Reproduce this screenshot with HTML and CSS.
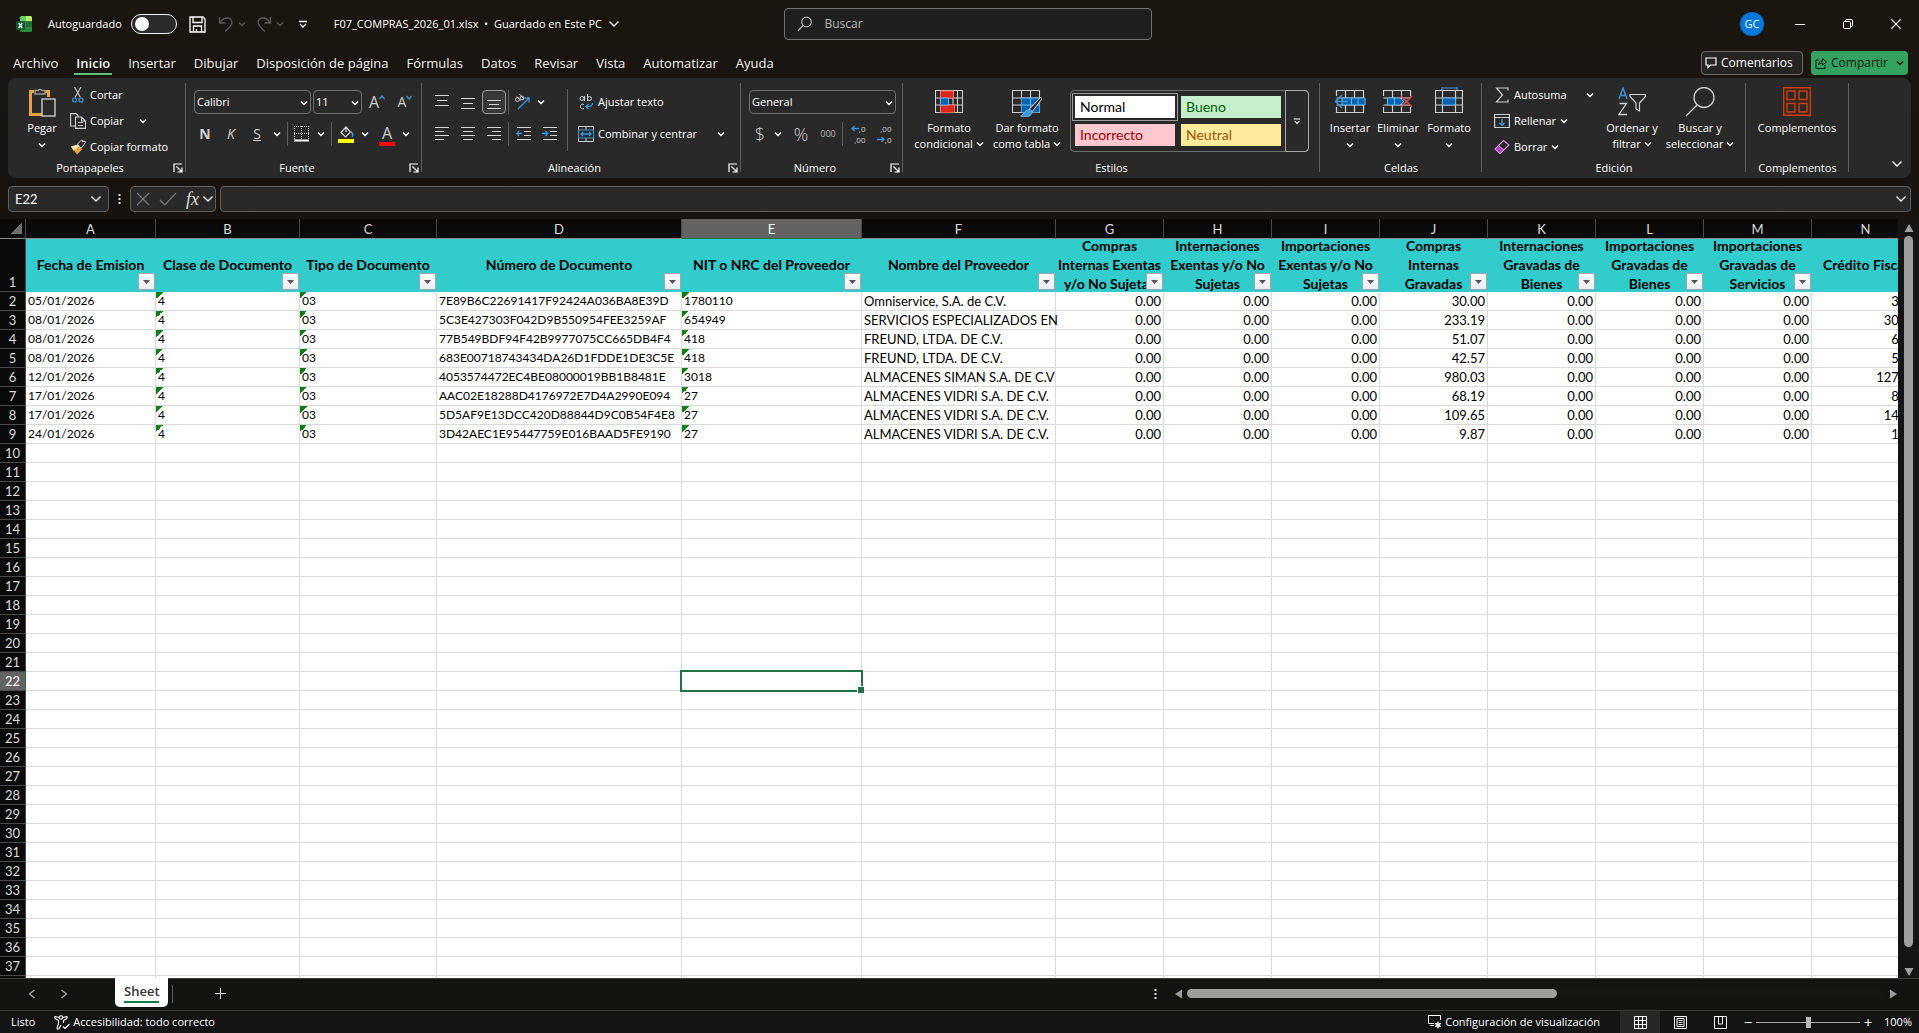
FILE: index.html
```html
<!DOCTYPE html>
<html lang="es">
<head>
<meta charset="utf-8">
<title>F07_COMPRAS_2026_01.xlsx - Excel</title>
<link rel="stylesheet" href="styles.css">
</head>
<body>
<svg class="defs" aria-hidden="true">
  <symbol id="chev" viewBox="0 0 8 8"><path d="M1 2.500l3 3 3-3" fill="none" stroke="currentColor" stroke-width="1.400"/></symbol>
  <symbol id="chev-lg" viewBox="0 0 12 12"><path d="M1.500 3.500L6 8l4.500-4.500" fill="none" stroke="currentColor" stroke-width="1.300"/></symbol>
  <symbol id="launch" viewBox="0 0 10 10"><path d="M1 9V1h8M3.500 3.500l5 5M9 4.500V9H4.500" fill="none" stroke="currentColor" stroke-width="1.200"/></symbol>
  <symbol id="more" viewBox="0 0 10 10"><path d="M1 2.500h8M2 5l3 3 3-3" fill="none" stroke="currentColor" stroke-width="1.300"/></symbol>
</svg>

<header class="titlebar">
  <div class="title-left">
    <svg class="app-icon" width="16" height="16" viewBox="0 0 16 16"><path d="M4 1.500A1.500 1.500 0 0 1 5.500 0H10v5.500H4z" fill="#5fd06a"/><path d="M10 0h4.500A1.500 1.500 0 0 1 16 1.500v4H10z" fill="#b5ef6c"/><path d="M4 5.500h12v9a1.500 1.500 0 0 1-1.500 1.500h-9A1.500 1.500 0 0 1 4 14.500z" fill="#2a8a3e"/><path d="M10 5.500h6V11h-6z" fill="#1f6e34"/><rect y="5" width="9" height="9" rx="1.500" fill="#0f5a30"/><path d="M2.700 7.200l3.600 4.800M6.300 7.200L2.700 12" stroke="#fff" stroke-width="1.300"/></svg>
    <label class="autosave"><span>Autoguardado</span><input type="checkbox" class="switch"></label>
    <button class="tb-btn save" aria-label="Guardar"><svg width="17" height="17" viewBox="0 0 17 17" fill="none" stroke="currentColor" stroke-width="1.300"><path d="M1 1h13l2 2v13H1zM4 1v5.500h9V1M4.500 16v-6h8v6M7.500 13v3"/></svg></button>
    <button class="tb-btn dim" aria-label="Deshacer"><svg width="16" height="16" viewBox="0 0 16 16" fill="none" stroke="currentColor" stroke-width="1.300"><path d="M1.500 1v6h6M1.500 7C4 3.500 6 2 9 2c3 0 5 2 5 4.500 0 3-3 5.500-7 9"/></svg></button>
    <svg class="chev dim"><use href="#chev"/></svg>
    <button class="tb-btn dim redo" aria-label="Rehacer"><svg width="16" height="16" viewBox="0 0 16 16" fill="none" stroke="currentColor" stroke-width="1.300"><path d="M14.500 1v6h-6M14.500 7C12 3.500 10 2 7 2 4 2 2 4 2 6.500c0 3 3 5.500 7 9"/></svg></button>
    <svg class="chev dim"><use href="#chev"/></svg>
    <button class="tb-btn custom" aria-label="Personalizar"><svg width="10" height="10"><use href="#more"/></svg></button>
    <button class="doc-name">F07_COMPRAS_2026_01.xlsx&nbsp; •&nbsp; Guardado en Este PC<svg width="12" height="12"><use href="#chev-lg"/></svg></button>
  </div>
  <label class="search"><svg width="16" height="16" viewBox="0 0 16 16" fill="none" stroke="#b8b8b8" stroke-width="1.200"><circle cx="9.500" cy="6" r="4.800"/><path d="M6 9.500L1 15"/></svg><input type="text" placeholder="Buscar" aria-label="Buscar"></label>
  <div class="title-right">
    <button class="avatar">GC</button>
    <button class="win" aria-label="Minimizar"><svg width="10" height="10"><path d="M0 5.500h10" stroke="#fff"/></svg></button>
    <button class="win" aria-label="Restaurar"><svg width="10" height="10" fill="none" stroke="#fff"><rect x=".5" y="2.500" width="7" height="7" rx="1"/><path d="M2.500 2.500v-1a1 1 0 0 1 1-1h5a1 1 0 0 1 1 1v5a1 1 0 0 1-1 1h-1"/></svg></button>
    <button class="win" aria-label="Cerrar"><svg width="10" height="10"><path d="M0 0l10 10M10 0L0 10" stroke="#fff" stroke-width="1.200"/></svg></button>
  </div>
</header>

<nav class="tabs">
  <a href="#">Archivo</a><a href="#" class="active">Inicio</a><a href="#">Insertar</a><a href="#">Dibujar</a><a href="#">Disposición de página</a><a href="#">Fórmulas</a><a href="#">Datos</a><a href="#">Revisar</a><a href="#">Vista</a><a href="#">Automatizar</a><a href="#">Ayuda</a>
  <div class="tab-actions">
    <button class="comments"><svg width="12" height="12" viewBox="0 0 12 12" fill="none" stroke="currentColor" stroke-width="1.200"><path d="M1 1h10v7H5.500L3 10.500V8H1z"/></svg>Comentarios</button>
    <button class="share"><svg width="12" height="12" viewBox="0 0 12 12" fill="none" stroke="currentColor"><path d="M4 3H1v8.500h9V8M3.500 8c.5-3 2-4 4-4V1.500L11.500 5 7.500 8V6c-2 0-3 .5-4 2z"/></svg>Compartir<svg class="chev"><use href="#chev"/></svg></button>
  </div>
</nav>

<section class="ribbon">
  <div class="group g-clip">
    <div class="body">
      <button class="big paste"><svg width="28" height="30" viewBox="0 0 28 30" fill="none"><path d="M6 4.500H2.500v23H14M17 4.500h3.500V10" stroke="#e8a33d" stroke-width="3"/><path d="M7 7V3.500h3a2.500 2.500 0 0 1 4 0h3V7z" fill="#292929" stroke="#9b9b9b" stroke-width="1.400"/><rect x="14" y="12" width="13" height="17" fill="#292929" stroke="#d8d8d8" stroke-width="1.300"/></svg><span>Pegar</span><svg class="chev"><use href="#chev"/></svg></button>
      <div class="stack">
        <button class="row"><svg width="16" height="16" viewBox="0 0 16 16" fill="none" stroke-width="1.200"><path d="M4.500 0l6 10.500M11 0L5 10.500" stroke="#c8c8c8"/><circle cx="4.500" cy="13" r="2" stroke="#3a96dd"/><circle cx="11" cy="13" r="2" stroke="#3a96dd"/></svg>Cortar</button>
        <button class="row"><svg width="16" height="16" viewBox="0 0 16 16" fill="none" stroke="#d0d0d0" stroke-width="1.100"><path d="M5 13H.6V.6H6l2 2V4"/><path d="M5.500 4h6l4 4v7.400h-10zM11.500 4v4h4M8 9.500h5M8 12.500h5"/></svg>Copiar<svg class="chev push"><use href="#chev"/></svg></button>
        <button class="row"><svg width="16" height="16" viewBox="0 0 16 16" fill="none"><path d="M1 7.500l7-2 4 5-5 5z" fill="#e8a33d"/><path d="M1 7.500l7-2 1.500 1.700-6 4.600z" fill="#f6dfae"/><path d="M7.500 5l4-4 1.500.5L12.500 3 15 2l.5 1.500-4.500 6z" fill="#292929" stroke="#d0d0d0"/></svg>Copiar formato</button>
      </div>
    </div>
    <footer class="launches">Portapapeles<button aria-label="Más opciones"><svg><use href="#launch"/></svg></button></footer>
  </div>

  <div class="group g-font">
    <div class="body lines">
      <div class="line fields">
        <span class="combo font-name"><select aria-label="Fuente"><option>Calibri</option></select><svg class="chev"><use href="#chev"/></svg></span>
        <span class="combo font-size"><select aria-label="Tamaño"><option>11</option></select><svg class="chev"><use href="#chev"/></svg></span>
        <button class="ic grow">A<svg width="6" height="5"><path d="M.5 4L3 1l2.500 3" fill="none" stroke="#3a96dd" stroke-width="1.200"/></svg></button>
        <button class="ic shrink">A<svg width="6" height="5"><path d="M.5 1L3 4l2.500-3" fill="none" stroke="#3a96dd" stroke-width="1.200"/></svg></button>
      </div>
      <div class="line">
        <button class="ic letter"><b>N</b></button><button class="ic letter"><i>K</i></button><button class="ic letter"><u>S</u></button><svg class="chev slot"><use href="#chev"/></svg>
        <span class="vsep w"></span>
        <button class="ic24" aria-label="Bordes"><svg width="16" height="16" fill="none" stroke="#d0d0d0"><path d="M.5 0v15M7.500 0v15M14.500 0v15M0 .5h15M0 7.500h15" stroke-dasharray="1 1"/><path d="M0 14.500h15" stroke="#fff" stroke-width="2"/></svg></button><svg class="chev slot"><use href="#chev"/></svg>
        <span class="vsep w"></span>
        <button class="ic24" aria-label="Color de relleno"><svg width="16" height="17" viewBox="0 0 16 17" fill="none"><path d="M8 1L3 6.500l4.500 4.500L12.500 6zM8 1v5" stroke="#d0d0d0" stroke-width="1.200"/><path d="M13 5.500c2 2 2 4 1 5.500" stroke="#3a96dd" stroke-width="1.600"/><path d="M0 13h16v4H0z" fill="#ff0"/></svg></button><svg class="chev slot"><use href="#chev"/></svg>
        <button class="ic24 fc">A</button><svg class="chev slot"><use href="#chev"/></svg>
      </div>
    </div>
    <footer class="launches">Fuente<button aria-label="Más opciones"><svg><use href="#launch"/></svg></button></footer>
  </div>

  <div class="group g-align">
    <div class="body">
      <div class="lines">
        <div class="line">
          <button class="ic" aria-label="Alinear arriba"><svg width="14" height="14" class="ln"><path d="M0 .5h14M2 5.500h10M0 10.500h14"/></svg></button><button class="ic" aria-label="Alinear en medio"><svg width="14" height="14" class="ln"><path d="M0 3.500h14M2 8.500h10M0 13.500h14"/></svg></button><button class="ic on" aria-label="Alinear abajo"><svg width="14" height="14" class="ln"><path d="M0 5.500h14M2 9.500h10M0 13.500h14"/></svg></button><span class="vsep"></span><button class="ic24" aria-label="Orientación"><svg width="16" height="16" viewBox="0 0 16 16" fill="none"><g stroke="#d0d0d0"><circle cx="3.500" cy="5.500" r="1.900"/><path d="M3 2.500l3.500 4"/><circle cx="8" cy="4" r="1.900"/><path d="M5.500 0l4 4.500"/></g><path d="M4 15L15 4M10.500 4H15v4.500" stroke="#3a96dd" stroke-width="1.400"/></svg></button><svg class="chev slot"><use href="#chev"/></svg>
        </div>
        <div class="line">
          <button class="ic" aria-label="Izquierda"><svg width="14" height="14" class="ln"><path d="M0 .5h14M0 4.500h9M0 8.500h14M0 12.500h9"/></svg></button><button class="ic" aria-label="Centrar"><svg width="14" height="14" class="ln"><path d="M0 .5h14M2 4.500h10M0 8.500h14M2 12.500h10"/></svg></button><button class="ic" aria-label="Derecha"><svg width="14" height="14" class="ln"><path d="M0 .5h14M5 4.500h9M0 8.500h14M5 12.500h9"/></svg></button><span class="vsep"></span><button class="ic" aria-label="Disminuir sangría"><svg width="15" height="14" class="ln"><path d="M1 .5h14M8 4.500h7M8 8.500h7M1 12.500h14"/><path d="M6 6.500H.8M3 4L.8 6.500 3 9" class="bl"/></svg></button><button class="ic" aria-label="Aumentar sangría"><svg width="15" height="14" class="ln"><path d="M1 .5h14M8 4.500h7M8 8.500h7M1 12.500h14"/><path d="M0 6.500h5.500M3.500 4l2.200 2.500L3.500 9" class="bl"/></svg></button>
        </div>
      </div>
      <span class="tall-sep"></span>
      <div class="lines wide">
        <button class="row"><svg width="16" height="16" viewBox="0 0 16 16" fill="none" stroke="#d0d0d0"><circle cx="4" cy="4.500" r="2"/><path d="M6.500 2v5M9.500 0v7"/><circle cx="11.500" cy="4.500" r="2"/><path d="M6 10.500c-1.500-1-3.500 0-3.500 2s2 3 3.500 2"/><path d="M14.500 9c0 3-2 3.500-6.500 3.500M10.500 10L8 12.500l2.500 2.500" stroke="#3a96dd" stroke-width="1.400"/></svg>Ajustar texto</button>
        <button class="row"><svg width="16" height="16" viewBox="0 0 16 16" fill="none" stroke="#d0d0d0"><path d="M.5.500h15v15H.5zM8 0v4M8 12v4"/><rect x=".5" y="4" width="15" height="8" fill="#292929" stroke="#3a96dd"/><path d="M3 8h10M5 6L3 8l2 2M11 6l2 2-2 2" stroke="#3a96dd" stroke-width="1.300"/></svg>Combinar y centrar<svg class="chev push"><use href="#chev"/></svg></button>
      </div>
    </div>
    <footer class="launches">Alineación<button aria-label="Más opciones"><svg><use href="#launch"/></svg></button></footer>
  </div>

  <div class="group g-num">
    <div class="body lines">
      <span class="combo"><select aria-label="Formato de número"><option>General</option></select><svg class="chev"><use href="#chev"/></svg></span>
      <div class="line">
        <button class="ic sym cur">$</button><svg class="chev slot"><use href="#chev"/></svg><button class="ic sym pct">%</button><button class="ic zeros">000</button><span class="vsep"></span>
        <button class="ic dec"><span><svg width="8" height="7"><path d="M8 3.500H1M3.500 1L1 3.500 3.500 6" class="bl"/></svg>,0</span><span>,00</span></button><button class="ic dec"><span>,00</span><span><svg width="8" height="7"><path d="M0 3.500h7M4.500 1L7 3.500 4.500 6" class="bl"/></svg>,0</span></button>
      </div>
    </div>
    <footer class="launches">Número<button aria-label="Más opciones"><svg><use href="#launch"/></svg></button></footer>
  </div>

  <div class="group g-styles">
    <div class="body">
      <button class="big"><svg width="28" height="30" viewBox="0 0 28 30" fill="none"><path d="M.5 3.500h27v22H.5zM0 11h28M0 18h28M5.500 3.500v22M18 3.500v22M22.500 3.500v22" stroke="#d0d0d0" stroke-width="1.100"/><path d="M5.500 4h13v7h-13zM5.500 18h14v7.500h-14z" fill="#d7261c" stroke="#ff6a5e"/><path d="M5.500 11h8v7h-8z" fill="#0063b1" stroke="#69b5f0"/></svg><span>Formato<br>condicional <svg class="chev"><use href="#chev"/></svg></span></button>
      <button class="big"><svg width="30" height="30" viewBox="0 0 30 30" fill="none"><path d="M.5 3.500h27v22H.5zM0 11h28M0 18h28M9.500 3.500v22M18.500 3.500v22" stroke="#d0d0d0" stroke-width="1.100"/><path d="M9.500 11h18v14.500h-18z" fill="#0063b1"/><path d="M9.500 18h18M18.500 11v14M9.500 11h18" stroke="#69b5f0"/><path d="M28.500 10.500c1 0 1.500 1 1 2L20 25l-3-2.500z" fill="#292929" stroke="#d8d8d8"/><path d="M17 22.500c3 0 4 3 2 5-2.500 3-7 3.500-10.500 1.500 3-1 3-5 8.500-6.500z" fill="#3a96dd" stroke="#8cc8f5" stroke-width=".8"/></svg><span>Dar formato<br>como tabla <svg class="chev"><use href="#chev"/></svg></span></button>
      <div class="gallery">
        <div class="swatches"><button class="st normal">Normal</button><button class="st good">Bueno</button><button class="st bad">Incorrecto</button><button class="st neutral">Neutral</button></div>
        <button class="more" aria-label="Más estilos"><svg width="8" height="8"><use href="#more"/></svg></button>
      </div>
    </div>
    <footer>Estilos</footer>
  </div>

  <div class="group g-cells">
    <div class="body">
      <button class="big"><svg width="32" height="30" viewBox="0 0 32 30" fill="none"><path d="M2.500 9V3.500h27v22h-27V20M11.500 3.500v22M20.500 3.500v22M2.500 11h27M2.500 18h27" stroke="#d0d0d0" stroke-width="1.200"/><path d="M8 11h23v7H8z" fill="#0063b1" stroke="#69b5f0"/><path d="M17.500 11v7M24 11v7" stroke="#69b5f0"/><path d="M14 14.500H1M8 8l-6.500 6.500L8 21" stroke="#3a96dd" stroke-width="1.500"/></svg><span>Insertar</span><svg class="chev"><use href="#chev"/></svg></button>
      <button class="big"><svg width="30" height="30" viewBox="0 0 30 30" fill="none"><path d="M.5 9V3.500h27V9M.5 20v5.500h27V20M9.500 3.500v22M18.500 3.500v22M.5 11h27M.5 18h27" stroke="#d0d0d0" stroke-width="1.200"/><path d="M4.500 11H17l4 3.500-4 3.500H4.500z" fill="#0063b1" stroke="#69b5f0"/><path d="M11.500 11v7" stroke="#69b5f0"/><path d="M18 9l11 11M29 9L18 20" stroke="#e5484d" stroke-width="1.500"/></svg><span>Eliminar</span><svg class="chev"><use href="#chev"/></svg></button>
      <button class="big wide-b"><svg width="28" height="30" viewBox="0 0 28 30" fill="none"><path d="M.5 3.500h27v22H.5zM0 11h28M0 18h28M7.500 3.500v22M20.500 3.500v22" stroke="#d0d0d0" stroke-width="1.200"/><path d="M7.500 11h13v7h-13z" fill="#0063b1" stroke="#69b5f0"/><path d="M7 0v3M22 0v3M7 1h15" stroke="#3a96dd" stroke-width="1.200"/></svg><span>Formato</span><svg class="chev"><use href="#chev"/></svg></button>
    </div>
    <footer>Celdas</footer>
  </div>

  <div class="group g-edit">
    <div class="body">
      <div class="stack">
        <button class="row"><svg width="16" height="16" viewBox="0 0 16 16" fill="none"><path d="M14 3.500V1H2.500l6 7-6 7H14v-2.500" stroke="#d0d0d0" stroke-width="1.200"/></svg>Autosuma<svg class="chev push"><use href="#chev"/></svg></button>
        <button class="row"><svg width="16" height="16" viewBox="0 0 16 16" fill="none"><path d="M.6 1.500h14.800v13H.6zM.6 4.500h14.800" stroke="#d0d0d0" stroke-width="1.200"/><path d="M8 6v6.500M5.500 10L8 12.500 10.500 10" stroke="#3a96dd" stroke-width="1.400"/></svg>Rellenar<svg class="chev"><use href="#chev"/></svg></button>
        <button class="row"><svg width="16" height="16" viewBox="0 0 16 16" fill="none"><path d="M9.500 1.500L15 6l-9 8.500L1 10z" stroke="#d892e6" stroke-width="1.100"/><path d="M4.500 6.500L10 11l-4 3.500L1 10z" fill="#b146c2" stroke="#d892e6"/></svg>Borrar<svg class="chev"><use href="#chev"/></svg></button>
      </div>
      <button class="big sort"><svg width="28" height="30" viewBox="0 0 28 30" fill="none"><path d="M1 12L5 1l4 11M2.500 8.500h5" stroke="#3a96dd" stroke-width="1.400"/><path d="M1.500 16.500h7L1 27.500h8" stroke="#d0d0d0" stroke-width="1.300"/><path d="M12 7.500h15.500v2L21.500 16v8l-3.500-2v-6l-6-6.500z" stroke="#d0d0d0" stroke-width="1.200"/></svg><span>Ordenar y<br>filtrar <svg class="chev"><use href="#chev"/></svg></span></button>
      <button class="big find"><svg width="30" height="30" viewBox="0 0 30 30" fill="none" stroke="#d0d0d0" stroke-width="1.300"><circle cx="19" cy="10.500" r="10"/><path d="M12 18L1 29"/></svg><span>Buscar y<br>seleccionar <svg class="chev"><use href="#chev"/></svg></span></button>
    </div>
    <footer>Edición</footer>
  </div>

  <div class="group g-add">
    <div class="body">
      <button class="big"><svg width="28" height="30" viewBox="0 0 28 30" fill="none" stroke="#d83b01" stroke-width="1.400"><path d="M.7.700h26.600v27.600H.7zM4 4h8v8.500H4zM16 4h8v8.500h-8zM4 16.500h8V25H4zM16 16.500h8V25h-8z"/></svg><span>Complementos</span></button>
    </div>
    <footer>Complementos</footer>
  </div>
  <button class="collapse" aria-label="Contraer la cinta"><svg width="12" height="12"><use href="#chev-lg"/></svg></button>
</section>

<section class="formula-bar">
  <span class="name-box"><input type="text" value="E22" aria-label="Cuadro de nombres"><svg width="12" height="12"><use href="#chev-lg"/></svg></span>
  <svg class="dots" width="3" height="12"><path d="M1.500 1v11" stroke="#ddd" stroke-width="2" stroke-dasharray="2 2"/></svg>
  <span class="fx-box">
    <button aria-label="Cancelar"><svg width="14" height="14"><path d="M1 1l12 12M13 1L1 13" stroke="#7a7a7a" stroke-width="1.200"/></svg></button><button aria-label="Introducir"><svg width="18" height="14"><path d="M1 8l5 5L17 1" fill="none" stroke="#7a7a7a" stroke-width="1.200"/></svg></button><button class="fx"><i>fx</i></button><svg width="12" height="12" class="fxc"><use href="#chev-lg"/></svg>
  </span>
  <span class="formula"><input type="text" aria-label="Barra de fórmulas"><svg width="12" height="12"><use href="#chev-lg"/></svg></span>
</section>

<main class="sheet">
  <div class="grid-view">
    <table id="grid"></table>
  </div>
  <div class="vscroll"><svg width="10" height="8"><path d="M5 0l4.500 8H.5z" fill="#9e9e9e"/></svg><span class="thumb"></span><svg width="10" height="8"><path d="M5 8L.5 0h9z" fill="#9e9e9e"/></svg></div>
</main>

<section class="sheet-tabs">
  <button class="nav-arrow" aria-label="Anterior"><svg width="8" height="10"><path d="M6.500 1L1.500 5l5 4" fill="none" stroke="#a8a8a8" stroke-width="1.300"/></svg></button>
  <button class="nav-arrow" aria-label="Siguiente"><svg width="8" height="10"><path d="M1.500 1l5 4-5 4" fill="none" stroke="#a8a8a8" stroke-width="1.300"/></svg></button>
  <button class="sheet-tab"><span>Sheet</span></button>
  <span class="tab-sep"></span>
  <button class="add" aria-label="Hoja nueva"><svg width="11" height="11"><path d="M0 5.500h11M5.500 0v11" stroke="#e0e0e0"/></svg></button>
  <div class="hbar">
    <svg class="dots" width="3" height="12"><path d="M1.500 1v11" stroke="#ddd" stroke-width="2" stroke-dasharray="2 2"/></svg>
    <div class="hscroll"><svg width="8" height="10"><path d="M0 5l7-4.500v9z" fill="#9e9e9e"/></svg><span class="track"><span class="thumb"></span></span><svg width="8" height="10"><path d="M8 5L1 .5v9z" fill="#9e9e9e"/></svg></div>
  </div>
</section>

<footer class="status">
  <span class="ready">Listo</span>
  <button class="acc"><svg width="16" height="15" viewBox="0 0 16 15" fill="none" stroke="#fff" stroke-width="1.100"><circle cx="7" cy="2.500" r="1.700"/><path d="M5 2.500L1.500 1.500C0 2 1 3.500 2 4l2.500 1.500v3L3 13c0 1.500 1.500 1.500 2 .5L7 10M9 2.500l3.500-1c1.500.5.500 2-.5 2.500L9.500 5.500V8M9 11.500l2 2L15.500 9"/></svg>Accesibilidad: todo correcto</button>
  <div class="status-right">
    <button class="disp"><svg width="14" height="14" viewBox="0 0 14 14" fill="none" stroke="#fff"><path d="M6 8.500H.5V.5h12V5M2 10.500h4"/><circle cx="10" cy="10" r="2"/><path d="M10 6.500v7M7 8.200l6 3.600M13 8.200l-6 3.600"/></svg>Configuración de visualización</button>
    <button class="view active-view" aria-label="Normal"><svg width="13" height="13" fill="none" stroke="#fff"><path d="M.5.500h12v12H.5zM4.500 0v13M8.500 0v13M0 4.500h13M0 8.500h13"/></svg></button>
    <button class="view" aria-label="Diseño de página"><svg width="13" height="13" fill="none" stroke="#fff"><path d="M.5.500h12v12H.5zM3 2.500h7v8H3zM4.500 4.500h4M4.500 6.500h4M4.500 8.500h4"/></svg></button>
    <button class="view" aria-label="Salto de página"><svg width="13" height="13" fill="none" stroke="#fff"><path d="M.5.500h12v12H.5zM4.500 0v8h4V0"/></svg></button>
    <button class="zb">−</button><input type="range" min="10" max="190" value="100" aria-label="Zoom"><button class="zb">+</button><button class="pct100">100%</button>
  </div>
</footer>
<script src="sheet.js"></script>
</body>
</html>
```

FILE: styles.css
```css
* { box-sizing: border-box; }
body {
  margin: 0;
  height: 100vh;
  display: flex;
  flex-direction: column;
  overflow: hidden;
  background: linear-gradient(#1c1611, #15110e 30%, #12150f 90%);
  color: #fff;
  font: 12px/16px "Open Sans", "Noto Sans", sans-serif;
}
button, input, select { font: inherit; color: inherit; background: none; border: 0; padding: 0; margin: 0; outline: 0; }
svg { display: block; flex: none; }
.defs { display: none; }
.chev { width: 8px; height: 8px; }
.dim { color: #5c5855; }
.bl { fill: none; stroke: #3a96dd; stroke-width: 1.3; }
.ln { fill: none; stroke: #d8d8d8; }

/* Title bar */
.titlebar { height: 48px; display: grid; grid-template-columns: 1fr 368px 1fr; align-items: center; padding-left: 16px; font-size: 11px; }
.title-left { display: flex; align-items: center; white-space: nowrap; }
.autosave { display: flex; align-items: center; gap: 9px; margin-left: 16px; }
.switch { appearance: none; width: 46px; height: 20px; border: 1px solid #f0f0f0; border-radius: 10px; background: #2b2b2b; padding: 2px 3px; }
.switch::before { content: ""; display: block; width: 14px; height: 14px; border-radius: 50%; background: #fff; }
.tb-btn { margin-left: 12px; }
.tb-btn + .chev { margin-left: 4px; }
.redo { margin-left: 10px; }
.custom { margin-left: 14px; }
.doc-name { display: flex; align-items: center; gap: 6px; margin-left: 26px; }
.search { display: flex; align-items: center; gap: 12px; height: 32px; padding: 0 12px; background: #1f1f1f; border: 1px solid #737170; border-radius: 4px; font-size: 12px; }
.search input { flex: 1; }
.search input::placeholder { color: #b8b8b8; opacity: 1; }
.title-right { display: flex; justify-content: flex-end; align-items: center; }
.avatar { width: 24px; height: 24px; border-radius: 50%; background: #0078d7; margin-right: 12px; }
.win { width: 48px; height: 32px; display: grid; place-items: center; }
.win:last-child { margin-right: -1px; }

/* Ribbon tabs */
.tabs { height: 30px; display: flex; padding: 0 11px 0 4px; font-size: 13px; }
.tabs a { height: 27px; line-height: 30px; padding: 0 9px; color: #f2f2f2; text-decoration: none; white-space: nowrap; }
.tabs .active { font-weight: 600; background: linear-gradient(#5fbf7c, #5fbf7c) center bottom / calc(100% - 14px) 2px no-repeat; }
.tab-actions { margin-left: auto; display: flex; gap: 8px; padding: 3px 0; }
.tab-actions button { height: 24px; display: flex; align-items: center; gap: 4px; border-radius: 4px; padding: 0 4px; font-size: 12px; }
.comments { width: 102px; background: #262423; outline: 1px solid #6b6866; outline-offset: -1px; }
.share { width: 97px; background: #35a35f; color: #0b1a10; }
.share .chev { margin-left: auto; }

/* Ribbon */
.ribbon { position: relative; display: flex; margin: 0 8px; height: 100px; padding: 5px 0 2px; background: #292929; border-radius: 8px; }
.group { display: flex; flex-direction: column; background: linear-gradient(#5e5e5e, #5e5e5e) right top / 1px 89px no-repeat; font-size: 11px; }
.body { flex: 1; display: flex; align-items: flex-start; }
.group footer { position: relative; height: 16px; text-align: center; }
.group .launches { padding-right: 14px; }
.group footer button { position: absolute; right: 3px; top: 3px; }
.group footer svg { width: 10px; height: 10px; }
.g-clip { width: 178px; }
.g-font { width: 236px; }
.g-align { width: 319px; }
.g-num { width: 162px; }
.g-styles { width: 417px; }
.g-cells { width: 162px; }
.g-edit { width: 264px; }
.g-add { width: 103px; }
.big { display: flex; flex-direction: column; align-items: center; padding-top: 4px; width: 72px; line-height: 16px; white-space: nowrap; }
.big > svg:first-child { margin-bottom: 3px; }
.big > .chev { margin-top: 5px; }
.big span .chev { display: inline-block; }
.paste { width: 48px; margin: 0 4px 0 10px; }
.stack { display: flex; flex-direction: column; gap: 2px; }
.row { display: flex; align-items: center; gap: 4px; height: 24px; white-space: nowrap; }
.push { margin-left: auto; }
.g-clip .stack .row:nth-child(2) { width: 77px; }
.lines { display: flex; flex-direction: column; align-items: stretch; gap: 8px; padding-top: 7px; }
.line { display: flex; align-items: center; height: 24px; }
.g-font .lines { padding-left: 6px; }
.fields { gap: 2px; padding-left: 2px; }
.combo { position: relative; display: block; height: 24px; }
.combo select { appearance: none; width: 100%; height: 24px; border: 1px solid #6e6e6e; border-radius: 4px; padding: 0 2px; background: #292929; }
.combo .chev { position: absolute; right: 3px; top: 9px; pointer-events: none; }
.font-name { width: 117px; }
.font-size { width: 49px; }
.ic { width: 26px; height: 24px; display: flex; align-items: center; justify-content: center; }
.ic24 { width: 24px; height: 24px; display: flex; align-items: center; justify-content: center; }
.slot { margin: 0 3px; }
.vsep { width: 1px; height: 24px; margin: 0 1px; background: #5e5e5e; }
.vsep.w { margin: 0 2px 0 3px; }
.letter { font-size: 14px; color: #d0d0d0; }
.grow, .shrink { color: #d0d0d0; }
.grow { font-size: 16px; }
.shrink { font-size: 14px; }
.grow svg, .shrink svg { align-self: flex-start; margin-top: 5px; }
.fc { font-size: 16px; line-height: 14px; color: #d0d0d0; margin-left: 3px; padding-bottom: 3px; background: linear-gradient(red, red) center 20px / 16px 4px no-repeat; }
.on { width: 24px; margin: 0 1px; border: 1px solid #9a9a9a; border-radius: 4px; background: #383838; }
.g-align .body { padding-left: 7px; }
.tall-sep { width: 1px; height: 62px; margin: 6px 10px 0 5px; background: #5e5e5e; }
.wide { flex: 1; padding-right: 16px; }
.g-num .lines { padding: 7px 7px 0 8px; }
.sym { font-size: 18px; color: #d0d0d0; font-weight: 300; }
.cur { width: 22px; }
.pct { width: 28px; margin-left: 2px; }
.zeros { font-size: 9px; color: #b8b8b8; }
.dec { flex-direction: column; font-size: 8px; line-height: 11px; color: #d0d0d0; }
.dec span { display: flex; align-items: center; justify-content: flex-end; width: 17px; }
.g-styles .body { padding-left: 10px; gap: 6px; }
.gallery { display: flex; width: 239px; height: 62px; margin: 7px 0 0 1px; border: 1px solid #6e6e6e; border-radius: 4px; }
.swatches { flex: 1; display: grid; grid-template-columns: 100px 100px; grid-template-rows: 22px 22px; gap: 6px; padding: 5px 4px; font: 14px/22px "Lato", sans-serif; }
.st { text-align: left; padding-left: 5px; }
.normal { background: #fff; color: #000; outline: 1px solid #9a9a9a; outline-offset: 2px; }
.good { background: #c6efce; color: #006100; }
.bad { background: #ffc7ce; color: #9c0006; }
.neutral { background: #ffeb9c; color: #9c5700; }
.more { width: 24px; margin: -1px; border: 1px solid #a8a8a8; border-radius: 0 4px 4px 0; display: grid; place-items: center; }
.g-cells .body { padding-left: 6px; }
.g-cells .big { width: 48px; }
.g-cells .wide-b { width: 54px; }
.g-edit .body { padding-left: 12px; }
.g-edit .stack { width: 100px; }
.g-edit .sort { width: 66px; margin-left: 5px; }
.g-edit .find { width: 70px; }
.g-add .big { width: 102px; }
.collapse { margin: auto 8px 6px auto; }

/* Formula bar */
.formula-bar { display: flex; align-items: center; height: 41px; padding: 0 8px; font-size: 12px; }
.name-box, .fx-box, .formula { height: 26px; display: flex; align-items: center; background: #292929; border: 1px solid #5e5e5e; border-radius: 4px; }
.name-box { width: 101px; padding: 0 6px; }
.name-box input { flex: 1; min-width: 0; font-family: "Lato", sans-serif; font-size: 13px; }
.formula-bar .dots { margin: 0 9px; }
.fx-box { width: 86px; gap: 9px; padding-left: 5px; }
.fx { font: 18px/20px "Liberation Serif", serif; color: #ddd; }
.fxc { margin-left: -6px; }
.formula { flex: 1; margin-left: 4px; padding: 0 3px; }
.formula input { flex: 1; }

/* Grid */
.sheet { flex: 1; min-height: 0; display: flex; background: #141414; }
.grid-view { flex: 1; min-width: 0; overflow: hidden; background: #fff; color: #000; }
#grid { width: 1920px; table-layout: fixed; border-collapse: separate; border-spacing: 0; font: 13px/18px "Lato", sans-serif; }
#grid td { height: 19px; padding: 0 2px; border-right: 1px solid #dadada; border-bottom: 1px solid #dadada; white-space: nowrap; overflow: hidden; position: relative; }
#grid .num { text-align: right; }
#grid .code { font-size: 12px; }
#grid .name { padding-right: 0; overflow: visible; }
#grid th { padding: 0; font-weight: 400; background: #0a0a0a; color: #dcdcdc; }
#grid thead th { height: 20px; padding-top: 1px; line-height: 18px; border-right: 1px solid #4a4a4a; border-bottom: 1px solid #8c8c8c; }
#grid thead th.sel { background: #636363; border-bottom-color: #217346; color: #fff; }
#grid tbody th { height: 19px; border-right: 1px solid #4a4a4a; border-bottom: 1px solid #4a4a4a; vertical-align: bottom; }
#grid tbody th.sel { background: #636363; color: #fff; border-right-color: #217346; }
#grid .corner { background: linear-gradient(135deg, transparent 50%, #6e6e6e 50%) 10px 3px / 12px 12px no-repeat #0a0a0a; }
#grid .titles td { height: 53px; padding: 0; background: #33cccc; border-color: #33cccc; font-size: 14px; font-weight: 700; text-align: center; }
.cap { height: 52px; display: flex; flex-direction: column; justify-content: center; padding-bottom: 2px; line-height: 19px; overflow: hidden; }
.filter { position: absolute; right: 0; bottom: 1px; width: 17px; height: 17px; display: grid; place-items: center; background: linear-gradient(#fff, #e9ecf2); border: 1px solid #a0a4ac; }
#grid .err { background: linear-gradient(135deg, #0a8010 50%, transparent 50%) 0 0 / 7px 7px no-repeat; }
#grid .cursor { overflow: visible; z-index: 1; }
.cursor::before { content: ""; position: absolute; inset: -2px; border: 2px solid #217346; }
.cursor::after { content: ""; position: absolute; right: -3px; bottom: -3px; width: 6px; height: 6px; background: #217346; border: 1px solid #fff; border-width: 1px 0 0 1px; }
.vscroll { width: 21px; display: flex; flex-direction: column; align-items: center; padding: 5px 0 2px; }
.vscroll .thumb { flex: 1; width: 9px; margin: 4px 0 21px; border-radius: 5px; background: #9e9e9e; }

/* Sheet tabs */
.sheet-tabs { height: 32px; display: flex; align-items: center; padding-bottom: 2px; border-top: 1px solid #3a4038; background: #12150f; }
.nav-arrow { width: 32px; display: grid; place-items: center; }
.nav-arrow:first-child { margin-left: 16px; }
.sheet-tab { width: 53px; height: 29px; align-self: flex-start; margin: -1px 4px 0 35px; padding: 2px 9px 3px; background: #fff; color: #333; border-radius: 0 0 5px 5px; font-size: 13px; font-weight: 600; line-height: 20px; }
.sheet-tab span { display: block; border-bottom: 2px solid #107c41; }
.tab-sep { width: 1px; height: 18px; background: #555; }
.add { margin-left: 42px; }
.hbar { margin-left: auto; display: flex; align-items: center; gap: 18px; width: 765px; padding-right: 22px; }
.hscroll { flex: 1; display: flex; align-items: center; gap: 4px; }
.track { flex: 1; background: #141414; }
.track .thumb { display: block; width: 53%; height: 9px; border-radius: 5px; background: #9e9e9e; }

/* Status bar */
.status { height: 23px; display: flex; align-items: center; padding-left: 11px; background: #141414; border-top: 1px solid #3a3a3a; font-size: 11px; }
.acc { display: flex; align-items: center; gap: 3px; margin-left: 19px; }
.status-right { margin-left: auto; display: flex; align-items: center; height: 22px; padding-right: 7px; }
.disp { display: flex; align-items: center; gap: 3px; margin-right: 20px; }
.view { width: 40px; height: 22px; display: grid; place-items: center; }
.active-view { background: #262626; }
.zb { width: 16px; font-size: 15px; }
.status input { appearance: none; width: 104px; height: 16px; background: linear-gradient(#a8a8a8, #a8a8a8) center / 100% 1px no-repeat; }
.status input::-webkit-slider-thumb { appearance: none; width: 5px; height: 11px; background: #b8b8b8; }
.pct100 { margin-left: 8px; }
```

FILE: sheet.js
```js
const widths = [26, 130, 144, 137, 245, 180, 194, 108, 108, 108, 108, 108, 108, 108, 108];
const titles = [
  'Fecha de Emision', 'Clase de Documento', 'Tipo de Documento', 'Número de Documento',
  'NIT o NRC del Proveedor', 'Nombre del Proveedor', 'Compras|Internas Exentas|y/o No Sujetas',
  'Internaciones|Exentas y/o No|Sujetas', 'Importaciones|Exentas y/o No|Sujetas',
  'Compras|Internas|Gravadas', 'Internaciones|Gravadas de|Bienes', 'Importaciones|Gravadas de|Bienes',
  'Importaciones|Gravadas de|Servicios', 'Crédito Fiscal'
];
const records = [
  ['05/01/2026', '7E89B6C22691417F92424A036BA8E39D', '1780110', 'Omniservice, S.A. de C.V.', '30.00', '3.90'],
  ['08/01/2026', '5C3E427303F042D9B550954FEE3259AF', '654949', 'SERVICIOS ESPECIALIZADOS EN', '233.19', '30.31'],
  ['08/01/2026', '77B549BDF94F42B9977075CC665DB4F4', '418', 'FREUND, LTDA. DE C.V.', '51.07', '6.64'],
  ['08/01/2026', '683E00718743434DA26D1FDDE1DE3C5E', '418', 'FREUND, LTDA. DE C.V.', '42.57', '5.53'],
  ['12/01/2026', '4053574472EC4BE08000019BB1B8481E', '3018', 'ALMACENES SIMAN S.A. DE C.V', '980.03', '127.40'],
  ['17/01/2026', 'AAC02E18288D4176972E7D4A2990E094', '27', 'ALMACENES VIDRI S.A. DE C.V.', '68.19', '8.86'],
  ['17/01/2026', '5D5AF9E13DCC420D88844D9C0B54F4E8', '27', 'ALMACENES VIDRI S.A. DE C.V.', '109.65', '14.25'],
  ['24/01/2026', '3D42AEC1E95447759E016BAAD5FE9190', '27', 'ALMACENES VIDRI S.A. DE C.V.', '9.87', '1.28']
];
const filter = '<button class="filter" aria-label="Filtrar"><svg width="7" height="4"><path d="M0 0h7L3.500 4z" fill="#555"/></svg></button>';
const letters = 'ABCDEFGHIJKLMN'.split('');
const kinds = ['code', 'code err', 'code err', 'code', 'code err', 'name'];

let html = '<colgroup>' + widths.map(w => `<col style="width:${w}px">`).join('') + '</colgroup>';
html += '<thead><tr><th class="corner"></th>' +
  letters.map(l => `<th class="${l === 'E' ? 'sel' : ''}">${l}</th>`).join('') + '</tr></thead><tbody>';
html += '<tr class="titles"><th>1</th>' + titles.map((t, i) =>
  `<td><div class="cap"><span>${t.replace(/\|/g, '<br>')}</span></div>${i < 13 ? filter : ''}</td>`).join('') + '</tr>';

for (let r = 2; r <= 38; r++) {
  const d = records[r - 2];
  html += `<tr><th class="${r === 22 ? 'sel' : ''}">${r}</th>`;
  letters.forEach((l, i) => {
    let text = '', cls = '';
    if (d) {
      text = [d[0], '4', '03', d[1], d[2], d[3], '0.00', '0.00', '0.00', d[4], '0.00', '0.00', '0.00', d[5]][i];
      cls = kinds[i] || 'num';
    }
    if (r === 22 && l === 'E') cls = 'cursor';
    html += `<td class="${cls}">${text}</td>`;
  });
  html += '</tr>';
}
document.getElementById('grid').innerHTML = html + '</tbody>';
```
